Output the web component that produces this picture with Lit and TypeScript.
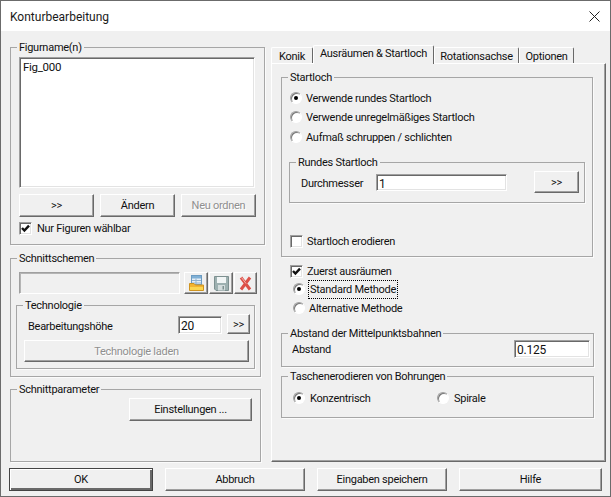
import { LitElement, html, css, svg } from "lit";
import { customElement } from "lit/decorators.js";

const check = svg`<svg class="tick" viewBox="0 0 11 11" width="11" height="11"><path d="M2 5 L4.4 7.6 L9 2.6" fill="none" stroke="#111" stroke-width="2.4"/></svg>`;

const openIcon = html`<svg viewBox="0 0 15 16" width="15" height="16">
  <rect x="2.5" y="0.5" width="10" height="9" fill="#e6eff7" stroke="#6d9cc2"/>
  <rect x="3" y="1" width="9" height="2.5" fill="#7fb0d6"/>
  <path d="M3 5.5H12M3 8H12M7 3.5V9.5" stroke="#8fb2cf" fill="none"/>
  <path d="M0.5 8.5H5L6.5 10H14.5V15.5H0.5Z" fill="#f2b431" stroke="#cf9420"/>
  <rect x="1" y="12" width="13" height="3" fill="#fcd650"/>
</svg>`;

const saveIcon = html`<svg viewBox="0 0 15 15" width="15" height="15">
  <path d="M0.5 0.5H14.5V14.5H2L0.5 13Z" fill="#9db0b0" stroke="#7d9090"/>
  <rect x="3" y="1" width="9" height="6" fill="#f1f5f5"/>
  <rect x="4" y="9" width="7" height="5.5" fill="#d3dcdc"/>
  <rect x="8.5" y="10" width="1.5" height="3.5" fill="#7d9090"/>
</svg>`;

const delIcon = html`<svg viewBox="0 0 13 15" width="13" height="15">
  <path d="M2 1.5 L11 13.5 M11 1.5 L2 13.5" stroke="#dc5149" stroke-width="3" fill="none"/>
  <path d="M2.5 1.5 L7 7.5" stroke="#f4b3ae" stroke-width="1" fill="none"/>
</svg>`;

@customElement("app-root")
export class AppRoot extends LitElement {
  static styles = css`
    :host {
      display: block;
      box-sizing: border-box;
      width: 611px;
      height: 497px;
      overflow: hidden;
      background: #f0f0f0;
      border: 1px solid #6b6b6b;
      font: 11px/14px Roboto, "Liberation Sans", sans-serif;
      letter-spacing: -0.27px;
      color: #111;
    }
    * { box-sizing: border-box; }

    .title {
      height: 30px;
      background: #fff;
      display: flex;
      align-items: center;
      justify-content: space-between;
      padding: 0 10px 0 9px;
      font: 12px Roboto, sans-serif;
      letter-spacing: 0;
      color: #1a1a1a;
    }
    .title span { padding-top: 2px; }
    .main { display: flex; height: 437px; }
    .left { width: 261px; margin-left: 9px; }
    .right { width: 335px; }

    .group { border: 1px solid #a6a6a6; box-shadow: 1px 1px 0 #fbfbfb; }
    .legend {
      display: block;
      width: fit-content;
      height: 14px;
      margin: -8px 0 0 6px;
      padding: 0 2px;
      background: #f0f0f0;
      line-height: 16px;
    }
    .g-figur { width: 255px; height: 198px; margin-top: 16px; }
    .g-schema { width: 251px; height: 119px; margin-top: 13px; }
    .g-param { width: 251px; height: 73px; margin-top: 12px; }
    .g-tech { width: 239px; height: 64px; margin: 11px 0 0 5px; }
    .g-start { width: 312px; height: 180px; margin: 13px 0 0 9px; }
    .g-rund { width: 296px; height: 41px; margin: 16px 0 0 7px; }
    .g-abst { width: 313px; height: 34px; margin: 16px 0 0 9px; }
    .g-tasche { width: 313px; height: 42px; margin: 9px 0 0 9px; }

    .sunken {
      background: #fff;
      border: 1px solid;
      border-color: #a0a0a0 #fff #fff #a0a0a0;
      box-shadow: inset 1px 1px 0 #696969, inset -1px -1px 0 #e3e3e3;
      padding: 2px 0 0 2px;
      font-size: 12px;
      letter-spacing: -0.2px;
    }
    .list { width: 236px; height: 131px; margin: 3px 0 0 8px; padding-left: 3px; font-size: 11.5px; letter-spacing: -0.3px; }
    .ro { width: 161px; height: 22px; background: #f0f0f0; box-shadow: inset 1px 1px 0 #b4b4b4; }
    .i-hoehe { width: 44px; height: 18px; margin-top: 2px; }
    .i-durch { width: 131px; height: 17px; margin-top: 3px; }
    .i-abst { width: 76px; height: 18px; }

    .btn {
      display: flex;
      align-items: center;
      justify-content: center;
      flex: none;
      height: 23px;
      padding-top: 1px;
      background: #f0f0f0;
      border: 1px solid;
      border-color: #fff #696969 #696969 #fff;
      box-shadow: inset -1px -1px 0 #a0a0a0;
      color: #111;
    }
    .off { color: #8f8f8f; text-shadow: 1px 1px 0 #fff; }
    .w75 { width: 75px; }
    .b-row { display: flex; gap: 6px; margin: 6px 0 0 8px; }
    .icons { display: flex; margin: 7px 0 0 8px; }
    .ic { height: 22px; width: 24px; margin-left: 1px; padding-top: 0; }
    .ic.first { margin-left: 4px; }
    .ic.last { width: 23px; margin-left: 1px; }
    .b-more { width: 23px; height: 20px; margin-left: 5px; }
    .b-tech { width: 225px; height: 22px; margin: 6px 0 0 7px; }
    .b-set { width: 123px; margin: 2px 0 0 118px; }
    .b-durch { width: 45px; height: 22px; margin-left: 27px; }

    .row { display: flex; align-items: center; }
    .t { padding-top: 2px; }
    .hr-tech { height: 20px; margin-top: 2px; padding-left: 11px; align-items: flex-start; }
    .hr-tech .lab { width: 150px; margin-top: 6px; }
    .hr-rund { height: 22px; margin-top: 2px; padding-left: 11px; align-items: flex-start; }
    .hr-rund .lab { width: 75px; margin-top: 6px; }
    .hr-abst { padding: 0 3px 0 10px; justify-content: space-between; height: 18px; }

    .cb {
      flex: none;
      width: 13px;
      height: 13px;
      background: #fff;
      border: 1px solid;
      border-color: #a0a0a0 #fff #fff #a0a0a0;
      box-shadow: inset 1px 1px 0 #696969, inset -1px -1px 0 #e3e3e3;
      display: flex;
      align-items: center;
      justify-content: center;
    }
    .tick { display: block; }
    .rb {
      flex: none;
      width: 12px;
      height: 12px;
      border-radius: 50%;
      background: #fff;
      border: 1px solid;
      border-color: #a0a0a0 #fff #fff #a0a0a0;
      box-shadow: inset 1px 1px 0 #777;
      display: flex;
      align-items: center;
      justify-content: center;
    }
    .rb.on::after { content: ""; width: 4px; height: 4px; border-radius: 50%; background: #000; }

    .opt { gap: 4px; height: 19px; padding-left: 8px; }
    .opt.first { margin-top: 4px; }
    .opt.third { margin-top: 1px; }
    .nur { gap: 5px; height: 14px; margin: 4px 0 0 8px; }
    .ero { gap: 4px; height: 20px; margin: 28px 0 0 8px; }
    .zuerst { gap: 4px; height: 18px; margin: 5px 0 0 18px; }
    .meth { gap: 3px; height: 18px; margin-left: 21px; }
    .meth.alt { gap: 4px; margin-top: 1px; }
    .focus { outline: 1px dotted #000; padding: 2px 1px 1px; margin-left: 1px; }
    .tr { height: 20px; margin-top: 5px; padding-left: 11px; }
    .tr .it { display: flex; align-items: center; gap: 5px; }
    .tr .it.a { width: 144px; }

    .tabs { display: flex; align-items: flex-end; height: 19px; margin-top: 14px; position: relative; z-index: 1; }
    .tab {
      height: 16px;
      padding-top: 2px;
      border: 1px solid;
      border-color: #fff #696969 transparent #fff;
      border-bottom: 0;
      border-radius: 2px 2px 0 0;
      background: #f0f0f0;
      display: flex;
      justify-content: center;
      align-items: center;
      margin-bottom: 1px;
      white-space: nowrap;
    }
    .tab.sel { height: 19px; margin-bottom: 0; align-items: flex-start; padding-top: 1px; }
    .t1 { width: 42px; }
    .t2 { width: 121px; }
    .t3 { width: 85px; }
    .t4 { width: 55px; }
    .pane {
      width: 335px;
      height: 399px;
      margin-top: -1px;
      border: 1px solid;
      border-color: #fff #696969 #696969 #fff;
      box-shadow: inset -1px -1px 0 #a0a0a0;
      overflow: hidden;
    }

    .footer { display: flex; gap: 12px; padding-left: 8px; }
    .f-ok { width: 144px; border: 1px solid #444; box-shadow: inset 1px 1px 0 #fff, inset -2px -2px 0 #696969; }
    .f-ab { width: 140px; }
    .f-ein { width: 130px; }
    .f-hi { width: 143px; }
  `;

  render() {
    return html`
      <div class="title">
        <span>Konturbearbeitung</span>
        <svg viewBox="0 0 11 11" width="11" height="11"><path d="M0.5 0.5L10.5 10.5M10.5 0.5L0.5 10.5" stroke="#222" fill="none"/></svg>
      </div>
      <div class="main">
        <div class="left">
          <div class="group g-figur">
            <span class="legend">Figurname(n)</span>
            <div class="sunken list">Fig_000</div>
            <div class="b-row">
              <div class="btn w75">&gt;&gt;</div>
              <div class="btn w75">Ändern</div>
              <div class="btn w75 off">Neu ordnen</div>
            </div>
            <div class="row nur"><span class="cb">${check}</span><span class="t">Nur Figuren wählbar</span></div>
          </div>
          <div class="group g-schema">
            <span class="legend">Schnittschemen</span>
            <div class="icons">
              <div class="sunken ro"></div>
              <div class="btn ic first">${openIcon}</div>
              <div class="btn ic">${saveIcon}</div>
              <div class="btn ic last">${delIcon}</div>
            </div>
            <div class="group g-tech">
              <span class="legend">Technologie</span>
              <div class="row hr-tech">
                <span class="lab">Bearbeitungshöhe</span>
                <div class="sunken i-hoehe">20</div>
                <div class="btn b-more">&gt;&gt;</div>
              </div>
              <div class="btn b-tech off">Technologie laden</div>
            </div>
          </div>
          <div class="group g-param">
            <span class="legend">Schnittparameter</span>
            <div class="btn b-set">Einstellungen ...</div>
          </div>
        </div>
        <div class="right">
          <div class="tabs">
            <div class="tab t1">Konik</div>
            <div class="tab t2 sel">Ausräumen &amp; Startloch</div>
            <div class="tab t3">Rotationsachse</div>
            <div class="tab t4">Optionen</div>
          </div>
          <div class="pane">
            <div class="group g-start">
              <span class="legend">Startloch</span>
              <div class="row opt first"><span class="rb on"></span><span class="t">Verwende rundes Startloch</span></div>
              <div class="row opt"><span class="rb"></span><span class="t">Verwende unregelmäßiges Startloch</span></div>
              <div class="row opt third"><span class="rb"></span><span class="t">Aufmaß schruppen / schlichten</span></div>
              <div class="group g-rund">
                <span class="legend">Rundes Startloch</span>
                <div class="row hr-rund">
                  <span class="lab">Durchmesser</span>
                  <div class="sunken i-durch">1</div>
                  <div class="btn b-durch">&gt;&gt;</div>
                </div>
              </div>
              <div class="row ero"><span class="cb"></span><span class="t">Startloch erodieren</span></div>
            </div>
            <div class="row zuerst"><span class="cb">${check}</span><span class="t">Zuerst ausräumen</span></div>
            <div class="row meth"><span class="rb on"></span><span class="focus">Standard Methode</span></div>
            <div class="row meth alt"><span class="rb"></span><span class="t">Alternative Methode</span></div>
            <div class="group g-abst">
              <span class="legend">Abstand der Mittelpunktsbahnen</span>
              <div class="row hr-abst">
                <span class="t">Abstand</span>
                <div class="sunken i-abst">0.125</div>
              </div>
            </div>
            <div class="group g-tasche">
              <span class="legend">Taschenerodieren von Bohrungen</span>
              <div class="row tr">
                <span class="it a"><span class="rb on"></span><span class="t">Konzentrisch</span></span>
                <span class="it"><span class="rb"></span><span class="t">Spirale</span></span>
              </div>
            </div>
          </div>
        </div>
      </div>
      <div class="footer">
        <div class="btn f-ok">OK</div>
        <div class="btn f-ab">Abbruch</div>
        <div class="btn f-ein">Eingaben speichern</div>
        <div class="btn f-hi">Hilfe</div>
      </div>
    `;
  }
}
